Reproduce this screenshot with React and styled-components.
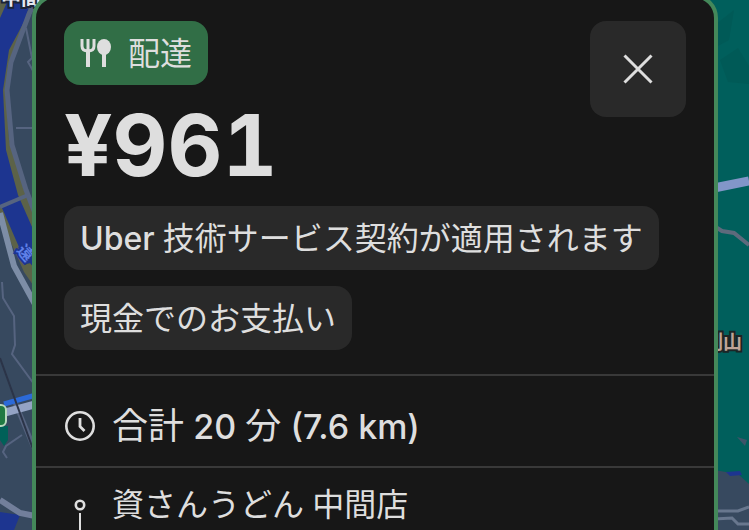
import React from "react";
import styled, { createGlobalStyle } from "styled-components";

const GlobalStyle = createGlobalStyle`
  * {
    box-sizing: border-box;
  }
  body {
    margin: 0;
    background-color: #37495f;
    font-family: Lato, "Noto Sans CJK JP", sans-serif;
    color: #dedede;
  }
`;

const MapBackground = () => (
  <MapSvg viewBox="0 0 749 530" preserveAspectRatio="xMidYMid slice" aria-hidden="true">
    <rect width="375" height="530" fill="#37495f" />
    <rect x="375" width="374" height="530" fill="#005f5c" />

    {/* river */}
    <path d="M0 0H36L28 14 12 54 6 90 9 140 24 190 40 230V295L24 272 0 218Z" fill="#5c6248" />
    <path d="M0 18 8 0H31L25 20 9 50 3 90 6 150 18 195 36 236V270L22 254 2 208 0 206Z" fill="#1d3590" />

    {/* roads */}
    <g fill="none" stroke="#566480">
      <path d="M34 4 29 14 11 62 7 90 12 145 26 190 40 226" strokeWidth="5" />
      <path d="M26 28 32 58 28 62 36 76M16 128H34" strokeWidth="2" />
      <path d="M0 207 28 195" strokeWidth="4" />
      <path d="M2 282 3 298 14 316 15 345 12 354 34 384" strokeWidth="2" />
      <path d="M22 435 6 446 3 452 7 458" strokeWidth="2" />
      <path d="M14 400 34 448" strokeWidth="5" />
    </g>
    <path d="M0 213 14 266 36 306" fill="none" stroke="#7d8da6" strokeWidth="6" />
    <path d="M0 414 40 403" stroke="#94a3c4" strokeWidth="8" />
    <path d="M4 404 36 395" stroke="#2c6ad8" strokeWidth="5" />
    <path d="M0 358 34 452" stroke="#2b3448" strokeWidth="2" />
    <path d="M0 426H8V440L4 446 0 440Z" fill="#006058" />
    <rect x="-14" y="405" width="20" height="21" rx="5" fill="#207a42" stroke="#b7d9bd" strokeWidth="2" />
    <path d="M0 512 20 515 14 530H0Z" fill="#1d3590" />
    <path d="M0 500 20 513 40 517" fill="none" stroke="#727f9b" strokeWidth="6" />

    {/* hills */}
    <path d="M716 24 734 10 729 40 718 46ZM720 60 738 48 749 66V84L728 82Z" fill="#005a57" />
    <path d="M714 188 749 181" stroke="#8296c8" strokeWidth="9" />
    <path d="M714 226 722 231 734 233 749 245" fill="none" stroke="#5d6a7c" strokeWidth="4" />
    <path d="M737 437 747 440 745 446Z" fill="#3d5468" />
    <path d="M714 470 738 474 749 484V530H714Z" fill="#37495f" />
    <path d="M726 472 740 471 742 475 730 476Z" fill="#1d3590" />
    <path d="M714 511H738L749 507M714 519 732 518 738 524H749" fill="none" stroke="#68778e" strokeWidth="3" />

    <MapLabel x="1" y="5" fill="#e4e8f0" stroke="#1b2438" fontSize="20">中間</MapLabel>
    <MapLabel x="20" y="258" fill="#5f80e8" stroke="#1d3590" fontSize="16" transform="rotate(50 26 250)">
      遠
    </MapLabel>
    <MapLabel x="704" y="349" fill="#bfa497" stroke="#1c2526" fontSize="19">剣山</MapLabel>
  </MapSvg>
);

const CutleryIcon = () => (
  <svg width="32" height="32" viewBox="0 0 32 32" fill="none" aria-hidden="true">
    <path d="M2 2V9Q2 14 8 14 14 14 14 9V2M8 2V13" stroke="currentColor" strokeWidth="3" />
    <path d="M8 13V30M24 16V30" stroke="currentColor" strokeWidth="4" />
    <ellipse cx="24" cy="10" rx="7" ry="8" fill="currentColor" />
  </svg>
);

const CloseIcon = () => (
  <svg width="32" height="32" viewBox="0 0 32 32" fill="none" aria-hidden="true">
    <path d="M2.5 2.5 29.5 29.5M29.5 2.5 2.5 29.5" stroke="currentColor" strokeWidth="3" />
  </svg>
);

const ClockIcon = () => (
  <svg width="32" height="32" viewBox="0 0 32 32" fill="none" stroke="currentColor" aria-hidden="true">
    <circle cx="16" cy="16" r="13.7" strokeWidth="2.6" />
    <path d="M16 8V16.5L20.5 21" strokeWidth="2.8" />
  </svg>
);

const PickupIcon = () => (
  <svg width="32" height="64" viewBox="0 0 32 64" fill="none" stroke="currentColor" aria-hidden="true">
    <circle cx="16" cy="21" r="4.2" strokeWidth="2.6" />
    <path d="M16 29V64" strokeWidth="2" />
  </svg>
);

const App = () => {
  return (
    <>
      <GlobalStyle />
      <Screen>
        <MapBackground />
        <OfferCard>
          <Summary>
            <TopRow>
              <div>
                <Tag>
                  <CutleryIcon />
                  配達
                </Tag>
                <Price>¥961</Price>
              </div>
              <CloseButton type="button" aria-label="閉じる">
                <CloseIcon />
              </CloseButton>
            </TopRow>
            <Chips>
              <Chip>
                <Brand>Uber</Brand> 技術サービス契約が適用されます
              </Chip>
              <Chip>現金でのお支払い</Chip>
            </Chips>
          </Summary>
          <TripRow>
            <ClockIcon />
            <TripText>
              合計 <Amount>20</Amount> 分 <Amount>(7.6 km)</Amount>
            </TripText>
          </TripRow>
          <StopRow>
            <PickupIcon />
            <StopText>資さんうどん 中間店</StopText>
          </StopRow>
        </OfferCard>
      </Screen>
    </>
  );
};

const Screen = styled.main`
  position: relative;
  display: flex;
  height: 100vh;
  overflow: hidden;
`;

const MapSvg = styled.svg`
  position: absolute;
  inset: 0;
  width: 100%;
  height: 100%;
`;

const MapLabel = styled.text`
  font-weight: 700;
  stroke-width: 4px;
  paint-order: stroke;
`;

const OfferCard = styled.section`
  position: relative;
  flex: 1;
  align-self: flex-start;
  min-height: 110vh;
  margin: -6px 31px 0 32px;
  border: 4px solid #44885a;
  border-radius: 24px;
  background-color: #171717;
`;

const Summary = styled.div`
  padding: 23px 28px 24px;
`;

const TopRow = styled.div`
  display: flex;
  justify-content: space-between;
  align-items: flex-start;
`;

const Tag = styled.div`
  display: inline-flex;
  align-items: center;
  gap: 16px;
  height: 64px;
  padding: 0 16px;
  border-radius: 16px;
  background-color: #316e46;
  font-size: 32px;
  line-height: 40px;
`;

const Price = styled.h1`
  margin: 13px 0 12px;
  font-family: Inter, sans-serif;
  font-size: 85px;
  font-weight: 700;
  font-variant-numeric: tabular-nums;
  line-height: 96px;
`;

const CloseButton = styled.button`
  display: flex;
  justify-content: center;
  align-items: center;
  width: 96px;
  height: 96px;
  padding: 0;
  border: none;
  border-radius: 16px;
  background-color: #292929;
  color: #dedede;
  cursor: pointer;
`;

const Chips = styled.div`
  display: flex;
  flex-direction: column;
  align-items: flex-start;
  gap: 16px;
`;

const Chip = styled.span`
  height: 64px;
  padding: 12px 16px;
  border-radius: 16px;
  background-color: #292929;
  font-size: 32px;
  line-height: 40px;
  white-space: nowrap;
`;

const Brand = styled.span`
  font-family: Inter, sans-serif;
  font-weight: 500;
`;

const TripRow = styled.div`
  display: flex;
  align-items: center;
  gap: 16px;
  height: 92px;
  padding: 10px 28px 0;
  border-top: 2px solid #393939;
`;

const TripText = styled.p`
  margin: 0;
  font-size: 36px;
  line-height: 48px;
  white-space: nowrap;
`;

const Amount = styled.span`
  font-family: Inter, sans-serif;
  font-size: 34px;
  font-weight: 500;
`;

const StopRow = styled.div`
  display: flex;
  align-items: flex-start;
  gap: 16px;
  padding: 16px 28px;
  border-top: 2px solid #393939;
`;

const StopText = styled.p`
  margin: 0;
  font-size: 32px;
  line-height: 40px;
  white-space: nowrap;
`;

export default App;
